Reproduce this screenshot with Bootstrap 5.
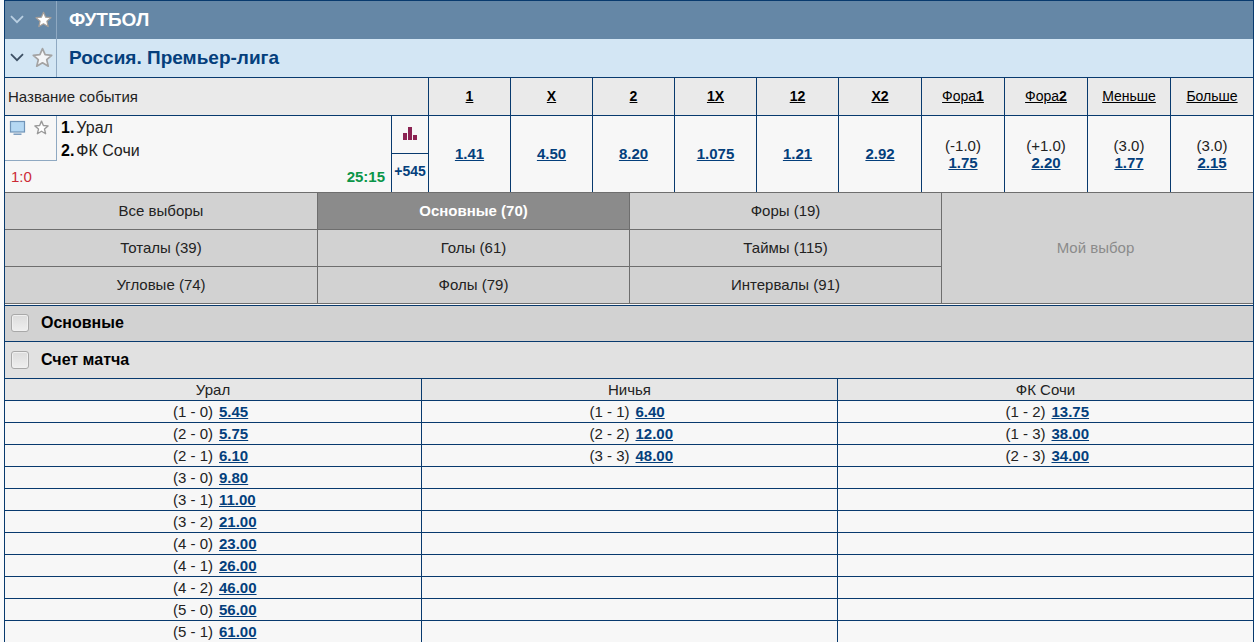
<!DOCTYPE html>
<html lang="ru">
<head>
<meta charset="utf-8">
<meta name="viewport" content="width=device-width, initial-scale=1">
<title>Футбол. Россия. Премьер-лига</title>
<link href="https://cdn.jsdelivr.net/npm/bootstrap@5.3.0/dist/css/bootstrap.min.css" rel="stylesheet">
<style>
  :root { --navy: #043f7c; --line: #083a6e; --soft: #f7f7f7; --grey: #d2d2d2; --grey-line: #6e6e6e; }
  body { font: 15px/22px "Liberation Sans", Arial, sans-serif; color: #222; background: #fafbfc; padding-left: 4px; }
  .board { border: 1px solid var(--line); border-bottom: 0; background: var(--soft); }
  .board a { color: var(--navy); }
  .bar { height: 38px; padding-bottom: 1px; }
  .bar-tools { width: 52px; height: 38px; border-right: 1px solid #8fa9c2; padding-left: 5px; }
  .bar-sport { background: #6587a6; color: #fff; }
  .bar-league { background: #d3e6f4; color: var(--navy); }
  .bar-title { font-size: 19px; line-height: 22px; padding-left: 12px; }
  .tool { border: 0; padding: 0; background: none; line-height: 0; }
  .star-slot { width: 22px; }
  .events { table-layout: fixed; width: 100%; border-collapse: separate; border-spacing: 0; }
  .events th { height: 38px; background: #eaeaea; border-top: 1px solid var(--line); font-weight: 400; padding: 0 0 2px; text-align: center; line-height: 20px; }
  .events th a { color: #000; font-size: 14px; }
  .events th.title-cell { text-align: left; padding: 0 0 0 3px; }
  .events td { height: 77px; border-top: 1px solid var(--line); padding: 0; text-align: center; line-height: 17px; }
  .events td.single { padding-bottom: 2px; }
  .events th + th, .events td + td { border-left: 1px solid var(--line); }
  .price { font-weight: 700; }
  .narrow { width: 82px; } .wide { width: 83px; } .extra { width: 37px; }
  .marks { width: 52px; height: 45px; border: solid #8fa9c2; border-width: 0 1px 1px 0; padding: 4px 7px 0 4px; }
  .teams { line-height: 23px; padding-left: 4px; font-size: 16px; }
  .teams b { color: #000; margin-right: 2px; }
  .status { padding: 6px 6px 0; }
  .score-now { color: #cc2a36; }
  .clock { color: #0a9548; font-weight: 700; }
  .half { height: 37px; padding-bottom: 2px; }
  .half + .half { border-top: 1px solid var(--line); height: 39px; padding-bottom: 3px; }
  .board .more { font-size: 14px; font-weight: 700; text-decoration: none; }
  .tabs { display: grid; grid-template-columns: repeat(4, 1fr); border-bottom: 1px solid var(--grey-line); }
  .tabs button { height: 37px; border: 0 solid var(--grey-line); border-top-width: 1px; background: var(--grey); color: #222; padding: 0; }
  .tabs button:not(.first) { border-left-width: 1px; }
  .tabs button.current { background: #8b8b8b; color: #fff; font-weight: 700; }
  .tabs button.mine { grid-column: 4; grid-row: 1 / span 3; height: auto; color: #8b8b8b; padding-right: 4px; }
  .group { height: 37px; border-top: 1px solid var(--line); padding-left: 6px; font-size: 16px; font-weight: 700; color: #000; }
  .group-main { background: var(--grey); margin-top: 1px; height: 36px; padding-bottom: 1px; }
  .group-sub { background: #e1e1e1; }
  .group input { appearance: none; width: 18px; height: 18px; margin: 0 12px 0 0; border: 1px solid #a8a8a8; border-radius: 3px; background: linear-gradient(#dcdcdc, #efefef); box-shadow: inset 0 0 0 1px #f0f0f0; }
  .scores { table-layout: fixed; width: 100%; border-collapse: separate; border-spacing: 0; }
  .scores th, .scores td { height: 22px; padding: 0; line-height: 21px; border-top: 1px solid var(--line); text-align: center; font-weight: 400; }
  .scores th { background: #e6e6e6; }
  .scores th + th, .scores td + td { border-left: 1px solid var(--line); }
  .pick { display: grid; grid-template-columns: 1fr 1fr; column-gap: 6px; padding-left: 6px; }
  .pick span { text-align: right; }
  .pick a { font-weight: 700; justify-self: start; }
</style>
</head>
<body>
<svg class="d-none">
  <symbol id="chevron" viewBox="0 0 14 9"><path d="M1 1.2 7 7.2 13 1.2" fill="none" stroke="currentColor" stroke-width="1.8"/></symbol>
  <symbol id="star" viewBox="0 0 20 20"><path d="M10 1.5 12.5 7.3 18.8 7.9 14 12.1 15.5 18.3 10 15 4.5 18.3 6 12.1 1.2 7.9 7.5 7.3Z" stroke-linejoin="round"/></symbol>
</svg>
<main class="board">
  <header class="bar bar-sport d-flex align-items-center">
    <div class="bar-tools d-flex align-items-center gap-2">
      <button class="tool" aria-label="Свернуть"><svg width="14" height="9" color="#b9cfe2"><use href="#chevron"/></svg></button>
      <button class="tool star-slot" aria-label="Избранное"><svg width="17" height="17" fill="#fff" stroke="#a79f98" stroke-width="1.4"><use href="#star"/></svg></button>
    </div>
    <h1 class="bar-title m-0 fw-bold">ФУТБОЛ</h1>
  </header>
  <header class="bar bar-league d-flex align-items-center">
    <div class="bar-tools d-flex align-items-center gap-1">
      <button class="tool" aria-label="Свернуть"><svg width="14" height="9" color="#3d5064"><use href="#chevron"/></svg></button>
      <button class="tool flex-grow-1" aria-label="Избранное"><svg width="21" height="21" fill="#f4f6f8" stroke="#a3a3a3" stroke-width="1.6"><use href="#star"/></svg></button>
    </div>
    <h2 class="bar-title m-0 fw-bold">Россия. Премьер-лига</h2>
  </header>

  <table class="events">
    <colgroup><col><col class="extra"><col class="narrow" span="5"><col class="wide" span="5"></colgroup>
    <thead>
      <tr>
        <th class="title-cell" colspan="2">Название события</th>
        <th><a class="fw-bold" href="#">1</a></th><th><a class="fw-bold" href="#">X</a></th><th><a class="fw-bold" href="#">2</a></th>
        <th><a class="fw-bold" href="#">1X</a></th><th><a class="fw-bold" href="#">12</a></th><th><a class="fw-bold" href="#">X2</a></th>
        <th><a href="#">Фора<b>1</b></a></th><th><a href="#">Фора<b>2</b></a></th><th><a href="#">Меньше</a></th><th><a href="#">Больше</a></th>
      </tr>
    </thead>
    <tbody>
      <tr>
        <td class="align-top text-start">
          <div class="d-flex">
            <div class="marks d-flex align-items-start justify-content-between">
              <svg width="18" height="16" viewBox="0 0 18 16"><rect x="1.5" y="1.5" width="14" height="10.5" fill="#b5d8f3" stroke="#7094b8" stroke-width="1.2"/><path d="M4.5 14.2h8" stroke="#7094b8" stroke-width="1.4"/></svg>
              <button class="tool" aria-label="В избранное"><svg width="15" height="15" fill="#fff" stroke="#999" stroke-width="1.8"><use href="#star"/></svg></button>
            </div>
            <div class="teams"><div><b>1.</b>Урал</div><div><b>2.</b>ФК Сочи</div></div>
          </div>
          <div class="status d-flex justify-content-between"><span class="score-now">1:0</span><span class="clock">25:15</span></div>
        </td>
        <td>
          <div class="half d-flex align-items-center justify-content-center"><svg width="14" height="14" viewBox="0 0 14 14" fill="#8b2252"><path d="M0 6h4v7H0zM5 0h4v13H5zM10 8h4v5h-4z"/></svg></div>
          <div class="half d-flex align-items-center justify-content-center"><a class="more" href="#">+545</a></div>
        </td>
        <td class="single"><a class="price" href="#">1.41</a></td><td class="single"><a class="price" href="#">4.50</a></td><td class="single"><a class="price" href="#">8.20</a></td>
        <td class="single"><a class="price" href="#">1.075</a></td><td class="single"><a class="price" href="#">1.21</a></td><td class="single"><a class="price" href="#">2.92</a></td>
        <td>(-1.0)<br><a class="price" href="#">1.75</a></td><td>(+1.0)<br><a class="price" href="#">2.20</a></td>
        <td>(3.0)<br><a class="price" href="#">1.77</a></td><td>(3.0)<br><a class="price" href="#">2.15</a></td>
      </tr>
    </tbody>
  </table>

  <nav class="tabs">
    <button class="first">Все выборы</button><button class="current">Основные (70)</button><button>Форы (19)</button>
    <button class="mine">Мой выбор</button>
    <button class="first">Тоталы (39)</button><button>Голы (61)</button><button>Таймы (115)</button>
    <button class="first">Угловые (74)</button><button>Фолы (79)</button><button>Интервалы (91)</button>
  </nav>

  <label class="group group-main d-flex align-items-center"><input type="checkbox">Основные</label>
  <label class="group group-sub d-flex align-items-center"><input type="checkbox">Счет матча</label>

  <table class="scores">
    <thead><tr><th>Урал</th><th>Ничья</th><th>ФК Сочи</th></tr></thead>
    <tbody>
      <tr><td><div class="pick"><span>(1 - 0)</span><a href="#">5.45</a></div></td><td><div class="pick"><span>(1 - 1)</span><a href="#">6.40</a></div></td><td><div class="pick"><span>(1 - 2)</span><a href="#">13.75</a></div></td></tr>
      <tr><td><div class="pick"><span>(2 - 0)</span><a href="#">5.75</a></div></td><td><div class="pick"><span>(2 - 2)</span><a href="#">12.00</a></div></td><td><div class="pick"><span>(1 - 3)</span><a href="#">38.00</a></div></td></tr>
      <tr><td><div class="pick"><span>(2 - 1)</span><a href="#">6.10</a></div></td><td><div class="pick"><span>(3 - 3)</span><a href="#">48.00</a></div></td><td><div class="pick"><span>(2 - 3)</span><a href="#">34.00</a></div></td></tr>
      <tr><td><div class="pick"><span>(3 - 0)</span><a href="#">9.80</a></div></td><td></td><td></td></tr>
      <tr><td><div class="pick"><span>(3 - 1)</span><a href="#">11.00</a></div></td><td></td><td></td></tr>
      <tr><td><div class="pick"><span>(3 - 2)</span><a href="#">21.00</a></div></td><td></td><td></td></tr>
      <tr><td><div class="pick"><span>(4 - 0)</span><a href="#">23.00</a></div></td><td></td><td></td></tr>
      <tr><td><div class="pick"><span>(4 - 1)</span><a href="#">26.00</a></div></td><td></td><td></td></tr>
      <tr><td><div class="pick"><span>(4 - 2)</span><a href="#">46.00</a></div></td><td></td><td></td></tr>
      <tr><td><div class="pick"><span>(5 - 0)</span><a href="#">56.00</a></div></td><td></td><td></td></tr>
      <tr><td><div class="pick"><span>(5 - 1)</span><a href="#">61.00</a></div></td><td></td><td></td></tr>
    </tbody>
  </table>
</main>
<script src="https://cdn.jsdelivr.net/npm/bootstrap@5.3.0/dist/js/bootstrap.bundle.min.js"></script>
</body>
</html>
